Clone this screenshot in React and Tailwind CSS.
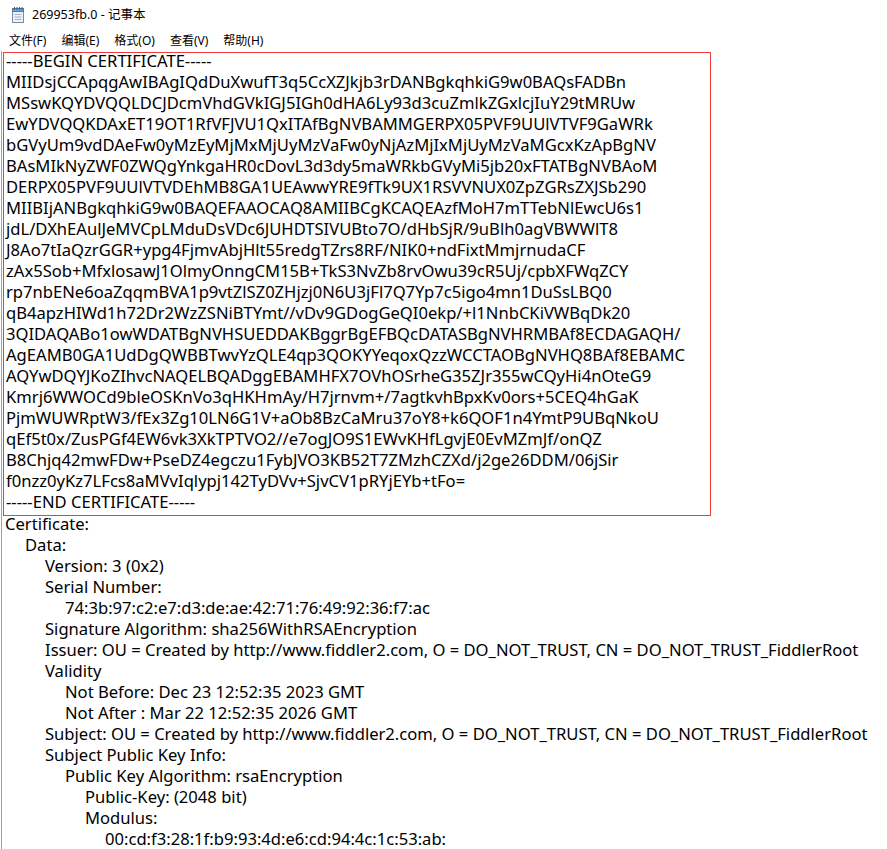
const pemLines = [
  "-----BEGIN CERTIFICATE-----",
  "MIIDsjCCApqgAwIBAgIQdDuXwufT3q5CcXZJkjb3rDANBgkqhkiG9w0BAQsFADBn",
  "MSswKQYDVQQLDCJDcmVhdGVkIGJ5IGh0dHA6Ly93d3cuZmlkZGxlcjIuY29tMRUw",
  "EwYDVQQKDAxET19OT1RfVFJVU1QxITAfBgNVBAMMGERPX05PVF9UUlVTVF9GaWRk",
  "bGVyUm9vdDAeFw0yMzEyMjMxMjUyMzVaFw0yNjAzMjIxMjUyMzVaMGcxKzApBgNV",
  "BAsMIkNyZWF0ZWQgYnkgaHR0cDovL3d3dy5maWRkbGVyMi5jb20xFTATBgNVBAoM",
  "DERPX05PVF9UUlVTVDEhMB8GA1UEAwwYRE9fTk9UX1RSVVNUX0ZpZGRsZXJSb290",
  "MIIBIjANBgkqhkiG9w0BAQEFAAOCAQ8AMIIBCgKCAQEAzfMoH7mTTebNlEwcU6s1",
  "jdL/DXhEAulJeMVCpLMduDsVDc6JUHDTSIVUBto7O/dHbSjR/9uBlh0agVBWWlT8",
  "J8Ao7tIaQzrGGR+ypg4FjmvAbjHlt55redgTZrs8RF/NIK0+ndFixtMmjrnudaCF",
  "zAx5Sob+MfxlosawJ1OlmyOnngCM15B+TkS3NvZb8rvOwu39cR5Uj/cpbXFWqZCY",
  "rp7nbENe6oaZqqmBVA1p9vtZlSZ0ZHjzj0N6U3jFl7Q7Yp7c5igo4mn1DuSsLBQ0",
  "qB4apzHIWd1h72Dr2WzZSNiBTYmt//vDv9GDogGeQI0ekp/+l1NnbCKiVWBqDk20",
  "3QIDAQABo1owWDATBgNVHSUEDDAKBggrBgEFBQcDATASBgNVHRMBAf8ECDAGAQH/",
  "AgEAMB0GA1UdDgQWBBTwvYzQLE4qp3QOKYYeqoxQzzWCCTAOBgNVHQ8BAf8EBAMC",
  "AQYwDQYJKoZIhvcNAQELBQADggEBAMHFX7OVhOSrheG35ZJr355wCQyHi4nOteG9",
  "Kmrj6WWOCd9bleOSKnVo3qHKHmAy/H7jrnvm+/7agtkvhBpxKv0ors+5CEQ4hGaK",
  "PjmWUWRptW3/fEx3Zg10LN6G1V+aOb8BzCaMru37oY8+k6QOF1n4YmtP9UBqNkoU",
  "qEf5t0x/ZusPGf4EW6vk3XkTPTVO2//e7ogJO9S1EWvKHfLgvjE0EvMZmJf/onQZ",
  "B8Chjq42mwFDw+PseDZ4egczu1FybJVO3KB52T7ZMzhCZXd/j2ge26DDM/06jSir",
  "f0nzz0yKz7LFcs8aMVvIqlypj142TyDVv+SjvCV1pRYjEYb+tFo=",
  "-----END CERTIFICATE-----",
];

const certLines = [
  [0, "Certificate:"],
  [1, "Data:"],
  [2, "Version: 3 (0x2)"],
  [2, "Serial Number:"],
  [3, "74:3b:97:c2:e7:d3:de:ae:42:71:76:49:92:36:f7:ac"],
  [2, "Signature Algorithm: sha256WithRSAEncryption"],
  [2, "Issuer: OU = Created by http://www.fiddler2.com, O = DO_NOT_TRUST, CN = DO_NOT_TRUST_FiddlerRoot"],
  [2, "Validity"],
  [3, "Not Before: Dec 23 12:52:35 2023 GMT"],
  [3, "Not After : Mar 22 12:52:35 2026 GMT"],
  [2, "Subject: OU = Created by http://www.fiddler2.com, O = DO_NOT_TRUST, CN = DO_NOT_TRUST_FiddlerRoot"],
  [2, "Subject Public Key Info:"],
  [3, "Public Key Algorithm: rsaEncryption"],
  [4, "Public-Key: (2048 bit)"],
  [4, "Modulus:"],
  [5, "00:cd:f3:28:1f:b9:93:4d:e6:cd:94:4c:1c:53:ab:"],
];

// 20px per indent level, like the 4-space tabs in the file
const indent = ["pl-0", "pl-5", "pl-10", "pl-15", "pl-20", "pl-25"];

function NotepadIcon() {
  return (
    <svg width="16" height="18" viewBox="0 0 16 18">
      <rect x="2.5" y="2.5" width="11" height="14" fill="#eef3f8" stroke="#7b8b9c" />
      <rect x="2.5" y="2.5" width="11" height="3" fill="#6aa6de" stroke="#4a7fb5" />
      <line x1="4.5" y1="1" x2="4.5" y2="4" stroke="#555" />
      <line x1="7" y1="1" x2="7" y2="4" stroke="#555" />
      <line x1="9.5" y1="1" x2="9.5" y2="4" stroke="#555" />
      <line x1="12" y1="1" x2="12" y2="4" stroke="#555" />
      <line x1="4.5" y1="8.5" x2="11.5" y2="8.5" stroke="#a8b4c0" />
      <line x1="4.5" y1="11" x2="11.5" y2="11" stroke="#a8b4c0" />
      <line x1="4.5" y1="13.5" x2="11.5" y2="13.5" stroke="#a8b4c0" />
    </svg>
  );
}

export default function App() {
  const menus = ["文件(F)", "编辑(E)", "格式(O)", "查看(V)", "帮助(H)"];

  return (
    <div
      className="w-[887px] h-[849px] overflow-hidden bg-white text-black"
      style={{ fontFamily: '"Noto Sans", "Noto Sans CJK SC", sans-serif' }}
    >
      {/* Title bar */}
      <div className="h-[30px] flex items-center gap-[6px] pl-[10px] text-[12.5px]">
        <NotepadIcon />
        <span>269953fb.0 - 记事本</span>
      </div>

      {/* Menu bar */}
      <div className="h-[21px] flex items-center pl-[9px] gap-[15px] text-[12px]">
        {menus.map((m) => (
          <span key={m}>{m}</span>
        ))}
      </div>

      {/* Editor */}
      <div className="border-l border-[#a0a0a0] ml-[1px] pt-[1px] text-[16.6px] leading-[21px]">
        <div className="w-[708px] border border-[#f03c3c] pl-[2px] pb-[3px] ml-[1px]">
          <div className="-mt-[3px]">
            {pemLines.map((l, i) => (
              <div key={i} className="whitespace-pre">{l}</div>
            ))}
          </div>
        </div>
        <div className="pl-[3px] -mt-[3px]">
          {certLines.map(([lvl, t], i) => (
            <div key={i} className={`whitespace-pre ${indent[lvl]}`}>{t}</div>
          ))}
        </div>
      </div>
    </div>
  );
}
